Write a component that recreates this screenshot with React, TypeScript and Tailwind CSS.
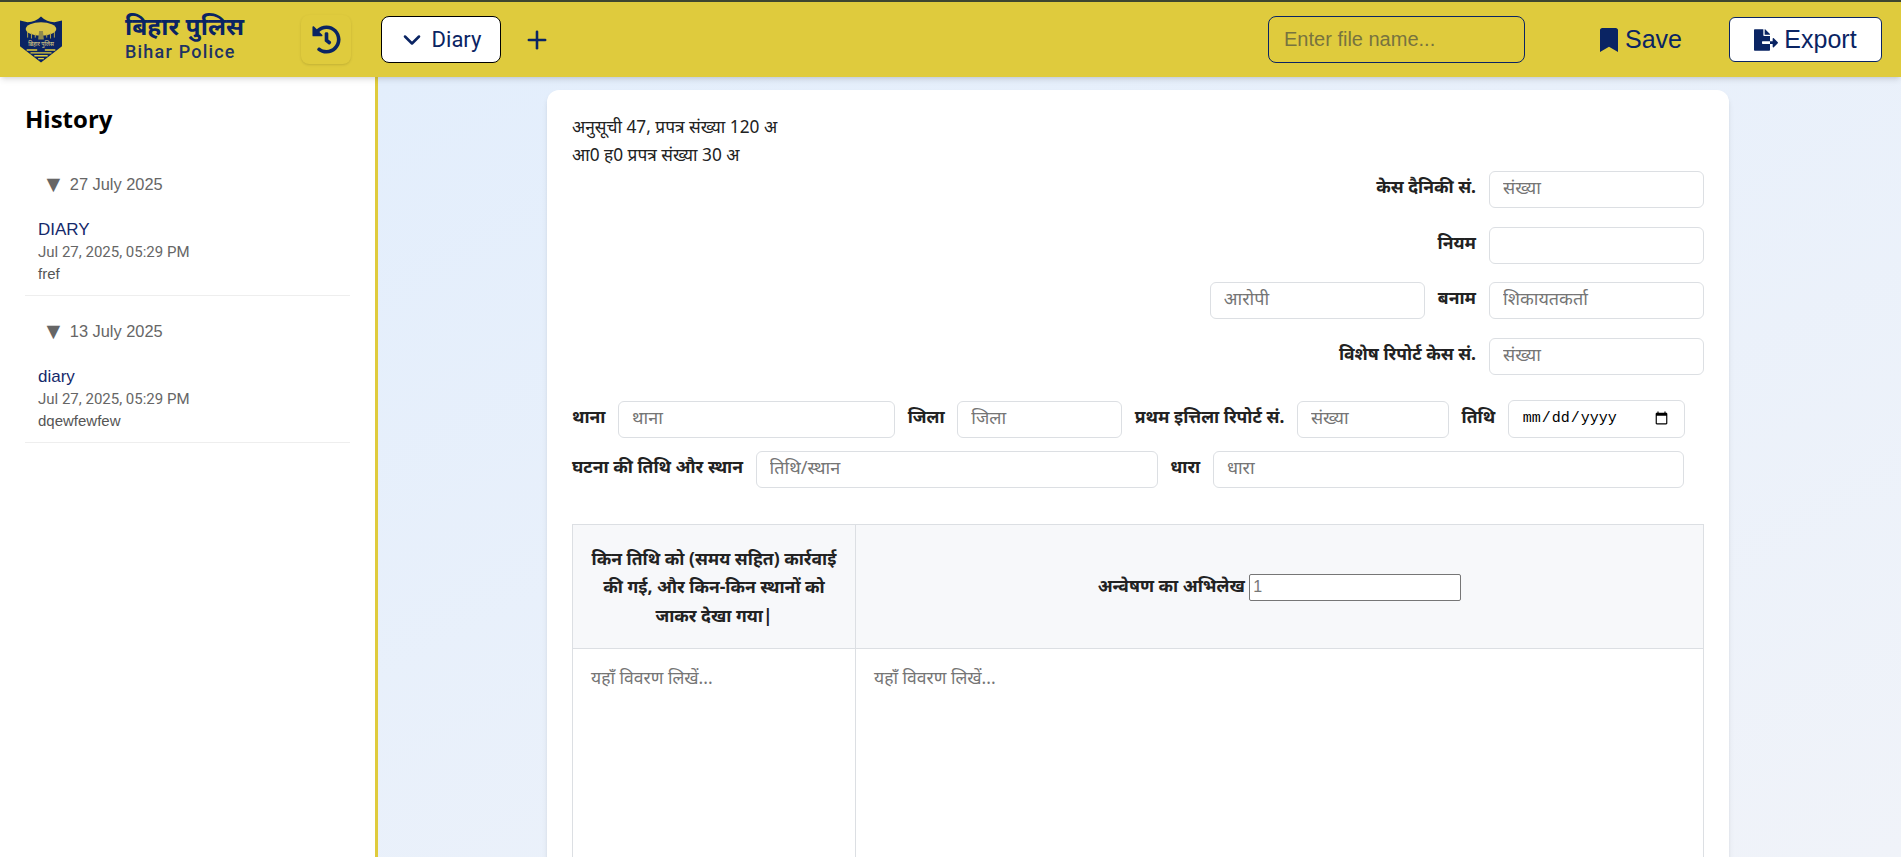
import React from 'react';
import { FaBookmark, FaFileExport, FaHistory } from 'react-icons/fa';
import { ChevronDown, Plus } from 'lucide-react';

const hindi = "font-['Noto_Sans','Noto_Sans_Devanagari','Open_Sans',sans-serif]";
const inputClass =
  `h-[37px] rounded-md border border-[#dcdfe3] bg-white px-[13px] pb-[5px] text-lg text-[#222] placeholder:text-[#757575] outline-none ${hindi}`;
const labelClass = `text-[17.5px] leading-[30px] font-bold text-[#222] whitespace-nowrap ${hindi}`;

const history = [
  { date: '27 July 2025', title: 'DIARY', time: 'Jul 27, 2025, 05:29 PM', note: 'fref' },
  { date: '13 July 2025', title: 'diary', time: 'Jul 27, 2025, 05:29 PM', note: 'dqewfewfew' },
];

const Logo = () => (
  <svg width="42" height="47" viewBox="0 0 44 48">
    <path d="M0 4 L8 6 Q16 6 22 0 Q28 6 36 6 L44 4 V31 L22 48 L0 31 Z" fill="#0a2463" />
    <ellipse cx="22" cy="13" rx="16" ry="7" fill="#d9c548" />
    <path d="M20 15 L19 24 H25 L24 15 Z" fill="#8f8a50" />
    <path d="M8 16 V22 M12 17 V23 M16 18 V22 M28 18 V22 M32 17 V23 M36 16 V22" stroke="#b8a94a" strokeWidth="1" />
    <text x="22" y="31" textAnchor="middle" fontSize="6" fill="#e8dc8a" fontFamily="Noto Sans, sans-serif">
      बिहार पुलिस
    </text>
    <path d="M7 35 H18 M26 35 H37 M11 38 H33 M15 41 H29 M19 44 H25" stroke="#dfcb3d" strokeWidth="1.4" />
  </svg>
);

const Header = () => (
  <header className="flex h-[77px] shrink-0 items-center border-t-2 border-[#3d4530] bg-[#dfcb3d] pr-[19px] shadow-md relative z-10">
    <div className="ml-[20px] w-[105px] shrink-0">
      <Logo />
    </div>
    <div className="w-[176px] shrink-0 -mt-[6px]">
      <div className={`mb-[2px] text-[24.5px] font-bold leading-7 text-[#0a2463] ${hindi}`}>बिहार पुलिस</div>
      <div className="font-['Roboto',sans-serif] text-lg font-medium leading-5 tracking-[1.2px] text-[#1f3363]">Bihar Police</div>
    </div>
    <button className="flex h-[49px] w-[50px] shrink-0 items-center justify-center rounded-lg bg-[#dfcb3d] text-[#0a2463] shadow-sm">
      <FaHistory size={29} />
    </button>
    <button className="ml-[30px] flex h-[47px] w-[120px] items-center justify-center gap-[6px] rounded-lg border border-black bg-white pr-[3px] font-['Roboto',sans-serif] text-[22px] font-normal text-[#0a2463]">
      <ChevronDown size={28} strokeWidth={2.2} />
      Diary
    </button>
    <button className="ml-[22px] text-[#0a2463]">
      <Plus size={28} strokeWidth={2.2} />
    </button>
    <input
      placeholder="Enter file name..."
      className="ml-auto h-[47px] w-[257px] rounded-lg border border-[#0a2463] bg-transparent px-[15px] font-['Liberation_Sans',sans-serif] text-xl placeholder:text-[#77733f] outline-none"
    />
    <button className="ml-[72px] flex items-center gap-[4px] font-['Liberation_Sans',sans-serif] text-[25px] text-[#0a2463]">
      <FaBookmark size={24} />
      Save
    </button>
    <button className="ml-[47px] flex h-[45px] w-[153px] items-center justify-center gap-[6px] rounded-md border border-[#0a2463] bg-white font-['Liberation_Sans',sans-serif] text-[25px] text-[#0a2463]">
      <FaFileExport size={24} />
      Export
    </button>
  </header>
);

const Sidebar = () => (
  <aside className="w-[378px] shrink-0 border-r-[3px] border-[#dfcb3d] bg-white pl-[25px] pr-[25px] pt-[25px]">
    <h2 className="font-['Open_Sans',sans-serif] text-2xl font-bold leading-[33px] text-black">History</h2>
    <div className="mt-[37px] flex flex-col gap-[23px]">
      {history.map((group) => (
        <div key={group.date} className="border-b border-[#eeeeee]">
          <div className="flex h-6 items-center pl-[17px] font-['Liberation_Sans',sans-serif] text-[16.4px] text-[#666]">
            <span className="mr-[5px] text-[23px] leading-none">▼</span>
            {group.date}
          </div>
          <div className="pl-[13px] pb-[10px] pt-[23px]">
            <div className="font-['Liberation_Sans',sans-serif] text-[17px] leading-[22px] text-[#15296b]">{group.title}</div>
            <div className="font-['Roboto',sans-serif] text-[15px] leading-[22px] text-[#666]">{group.time}</div>
            <div className="font-['Liberation_Sans',sans-serif] text-[15px] leading-[22px] text-[#555]">{group.note}</div>
          </div>
        </div>
      ))}
    </div>
  </aside>
);

const Form = () => (
  <div className="ml-[169px] w-[1182px] rounded-xl bg-white px-[25px] pt-[23px] shadow-md">
    <div className={`text-[17.3px] leading-7 text-[#222] ${hindi}`}>
      <p>अनुसूची 47, प्रपत्र संख्या 120 अ</p>
      <p>आ0 ह0 प्रपत्र संख्या 30 अ</p>
    </div>

    <div className="flex flex-col items-end gap-[18.6px] mt-[2px]">
      <div className="flex items-start gap-[13px]">
        <label className={labelClass}>केस दैनिकी सं.</label>
        <input placeholder="संख्या" className={`${inputClass} w-[215px]`} />
      </div>
      <div className="flex items-start gap-[13px]">
        <label className={labelClass}>नियम</label>
        <input className={`${inputClass} w-[215px]`} />
      </div>
      <div className="flex items-start gap-[13px]">
        <input placeholder="आरोपी" className={`${inputClass} w-[215px]`} />
        <label className={labelClass}>बनाम</label>
        <input placeholder="शिकायतकर्ता" className={`${inputClass} w-[215px]`} />
      </div>
      <div className="flex items-start gap-[13px]">
        <label className={labelClass}>विशेष रिपोर्ट केस सं.</label>
        <input placeholder="संख्या" className={`${inputClass} w-[215px]`} />
      </div>
    </div>

    <div className="mt-[26px] flex items-start gap-[12.6px]">
      <label className={labelClass}>थाना</label>
      <input placeholder="थाना" className={`${inputClass} w-[277px]`} />
      <label className={labelClass}>जिला</label>
      <input placeholder="जिला" className={`${inputClass} w-[165px]`} />
      <label className={labelClass}>प्रथम इत्तिला रिपोर्ट सं.</label>
      <input placeholder="संख्या" className={`${inputClass} w-[152px]`} />
      <label className={labelClass}>तिथि</label>
      <input type="date" className="-mt-[1px] h-[38px] w-[177px] rounded-md border border-[#dcdfe3] bg-white px-[13px] font-['Liberation_Mono',monospace] text-[15px] text-black outline-none" />
    </div>
    <div className="mt-[13px] flex items-start gap-[12.6px]">
      <label className={labelClass}>घटना की तिथि और स्थान</label>
      <input placeholder="तिथि/स्थान" className={`${inputClass} w-[402px]`} />
      <label className={labelClass}>धारा</label>
      <input placeholder="धारा" className={`${inputClass} w-[471px]`} />
    </div>

    <table className="mt-[36px] w-[1132px] table-fixed border-collapse">
      <thead>
        <tr className="h-[124px] bg-[#f7f8fa]">
          <th className={`w-[283px] border border-[#dcdfe3] px-[17px] text-center text-[17.5px] font-bold leading-[28.5px] text-[#222] ${hindi}`}>
            किन तिथि को (समय सहित) कार्रवाई की गई, और किन-किन स्थानों को जाकर देखा गया|
          </th>
          <th className={`border border-[#dcdfe3] text-center text-[17.5px] font-bold text-[#222] ${hindi}`}>
            अन्वेषण का अभिलेख{' '}
            <input
              defaultValue="1"
              className="h-[27px] w-[212px] rounded-[2px] border border-[#767676] bg-white px-[3px] font-['Liberation_Sans',sans-serif] text-base font-normal text-[#777] outline-none"
            />
          </th>
        </tr>
      </thead>
      <tbody>
        <tr>
          <td className="h-[400px] border border-[#dcdfe3] align-top p-0">
            <textarea placeholder="यहाँ विवरण लिखें..." className={`block h-full w-full resize-none px-[18px] py-[15px] text-[17.5px] placeholder:text-[#757575] outline-none ${hindi}`} />
          </td>
          <td className="h-[400px] border border-[#dcdfe3] align-top p-0">
            <textarea placeholder="यहाँ विवरण लिखें..." className={`block h-full w-full resize-none px-[18px] py-[15px] text-[17.5px] placeholder:text-[#757575] outline-none ${hindi}`} />
          </td>
        </tr>
      </tbody>
    </table>
  </div>
);

const App: React.FC = () => {
  return (
    <div className="flex h-screen flex-col overflow-hidden">
      <Header />
      <div className="flex min-h-0 flex-1">
        <Sidebar />
        <main className="flex-1 overflow-hidden bg-gradient-to-br from-[#e3eefc] to-[#f0f3f9] pt-[13px]">
          <Form />
        </main>
      </div>
    </div>
  );
};

export default App;
